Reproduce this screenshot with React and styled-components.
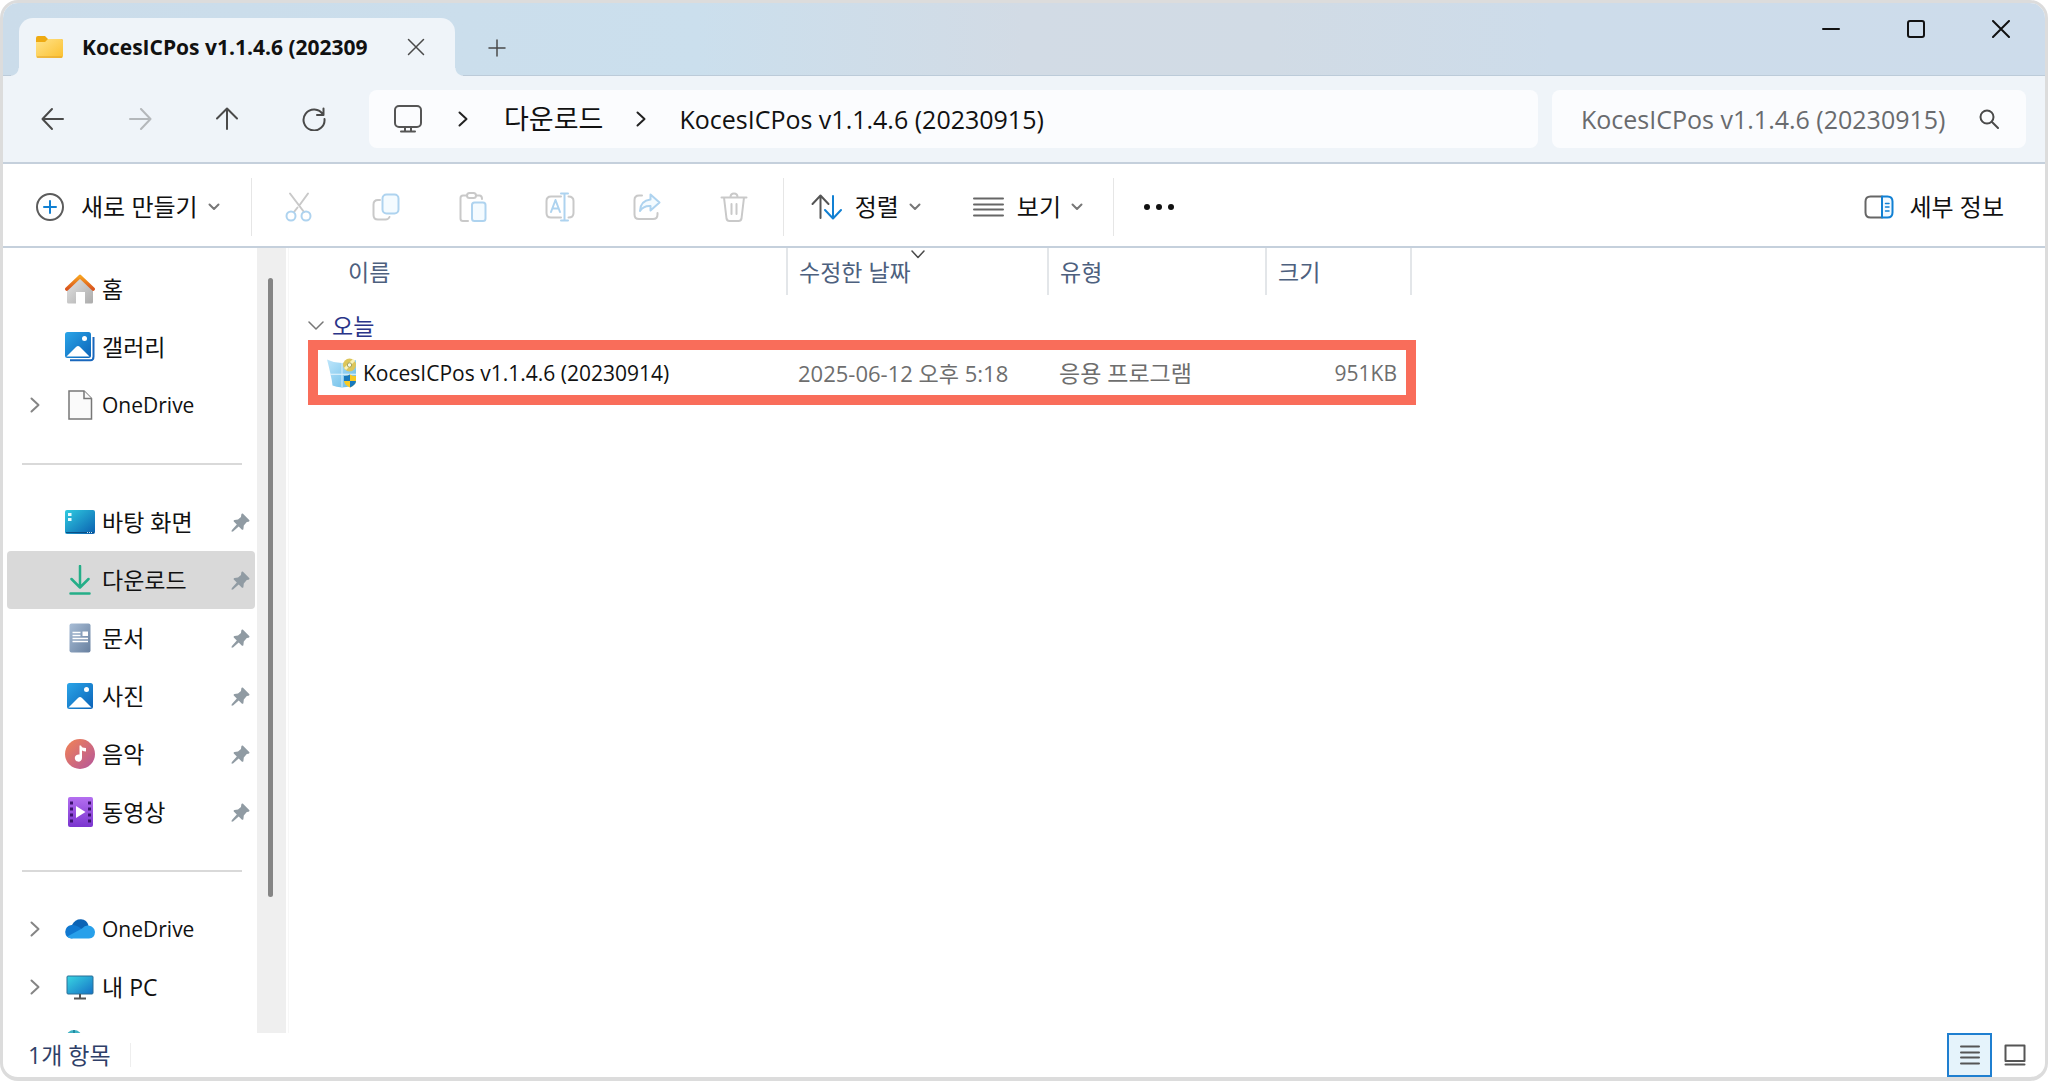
import styled, { createGlobalStyle } from "styled-components";

const GlobalStyle = createGlobalStyle`
  *, *::before, *::after {
    box-sizing: border-box;
  }

  body {
    margin: 0;
    background: #fff;
    font-family: "Open Sans", "Noto Sans CJK KR", sans-serif;
    color: #111;
  }

  button, input {
    font: inherit;
    color: inherit;
    border: none;
    background: none;
    padding: 0;
    margin: 0;
  }

  svg {
    display: block;
    flex-shrink: 0;
  }
`;

const Window = styled.div`
  height: 100vh;
  display: flex;
  flex-direction: column;
  overflow: hidden;
  background: #fff;
  border: 3px solid #dcdcdc;
  border-bottom-width: 4px;
  border-radius: 18px;
`;

const TitleBar = styled.header`
  display: flex;
  align-items: flex-end;
  height: 73px;
  flex-shrink: 0;
  padding-left: 16px;
  background: linear-gradient(90deg, #cbdcea 0%, #cbdfed 34%, #d2dbe5 50%, #d1dbe5 62%, #cddcea 76%, #cddceb 100%);
  box-shadow: inset 0 -1px #bccbd9;
`;

const Tab = styled.div`
  position: relative;
  display: flex;
  align-items: center;
  width: 436px;
  height: 58px;
  padding: 0 30px 0 17px;
  background: #eff4f9;
  border-radius: 14px 14px 0 0;

  &::before, &::after {
    content: "";
    position: absolute;
    bottom: 0;
    width: 8px;
    height: 8px;
  }

  &::before {
    left: -8px;
    background: radial-gradient(circle at 0 0, transparent 7px, #eff4f9 8px);
  }

  &::after {
    right: -8px;
    background: radial-gradient(circle at 100% 0, transparent 7px, #eff4f9 8px);
  }
`;

const TabTitle = styled.span`
  flex: 1;
  margin-left: 19px;
  font-size: 21px;
  font-weight: 700;
  line-height: 28px;
  white-space: nowrap;
`;

const NewTab = styled.button`
  display: grid;
  place-items: center;
  width: 50px;
  height: 56px;
  margin-left: 17px;
`;

const WindowControls = styled.div`
  display: flex;
  align-self: flex-start;
  margin-left: auto;
  margin-right: 2px;
`;

const WindowButton = styled.button`
  display: grid;
  place-items: center;
  width: 85px;
  height: 52px;
`;

const NavBar = styled.nav`
  display: flex;
  align-items: center;
  height: 88px;
  flex-shrink: 0;
  padding: 0 19px 0 6px;
  background: #eff4f9;
  border-bottom: 2px solid #c5d0dc;
`;

const NavButton = styled.button`
  display: grid;
  place-items: center;
  width: 87px;
  height: 58px;
  opacity: ${(props) => (props.disabled ? 0.35 : 1)};
`;

const Address = styled.div`
  display: flex;
  align-items: center;
  flex: 1;
  height: 58px;
  margin-left: 12px;
  padding-left: 25px;
  background: #fbfcfe;
  border-radius: 8px;
`;

const Crumb = styled.button`
  font-size: ${(props) => (props.$korean ? 27 : 25)}px;
  line-height: 36px;
  white-space: nowrap;
`;

const CrumbArrow = styled.span`
  display: grid;
  place-items: center;
  width: ${(props) => props.$width || 76}px;
`;

const Search = styled.label`
  display: flex;
  align-items: center;
  width: 474px;
  height: 58px;
  margin-left: 14px;
  padding: 0 27px 0 29px;
  background: #fbfcfe;
  border-radius: 8px;
`;

const SearchInput = styled.input`
  flex: 1;
  min-width: 0;
  font-size: 25px;
  line-height: 36px;
  outline: none;

  &::placeholder {
    color: #696b6e;
    opacity: 1;
  }
`;

const Toolbar = styled.div`
  display: flex;
  align-items: center;
  height: 84px;
  flex-shrink: 0;
  padding: 4px 41px 0 33px;
  border-bottom: 2px solid #c5d0dc;
`;

const ToolButton = styled.button`
  display: flex;
  align-items: center;
  gap: 10px;
  height: 58px;
  font-size: 24px;
  line-height: 32px;
  white-space: nowrap;
  margin-left: ${(props) => props.$space || 0}px;

  & > svg:first-child {
    margin-right: ${(props) => props.$iconSpace || 0}px;
  }
`;

const ToolIcon = styled.button`
  display: grid;
  place-items: center;
  width: 87px;
  height: 58px;
`;

const Divider = styled.span`
  width: 1px;
  height: 58px;
  margin: 0 ${(props) => props.$right}px 0 ${(props) => props.$left}px;
  background: #e6e6e6;
`;

const Push = styled.div`
  margin-left: auto;
`;

const Content = styled.div`
  display: flex;
  flex: 1;
  min-height: 0;
`;

const Sidebar = styled.aside`
  width: 254px;
  flex-shrink: 0;
  overflow: hidden;
  padding: 12px 2px 0 4px;
`;

const Place = styled.a`
  display: flex;
  align-items: center;
  height: 58px;
  padding-right: 5px;
  border-radius: 4px;
  color: #111;
  text-decoration: none;
  font-size: ${(props) => (props.$latin ? 21 : 23)}px;
  line-height: 32px;
  white-space: nowrap;
  background: ${(props) => (props.$active ? "#d9d9d9" : "transparent")};
`;

const PlaceArrow = styled.span`
  display: flex;
  width: 58px;
  padding-left: 23px;
`;

const PlaceIcon = styled.span`
  display: grid;
  place-items: center;
  width: 30px;
  margin-right: 7px;
`;

const Pin = styled.span`
  margin-left: auto;
`;

const Separator = styled.hr`
  height: 59px;
  margin: 0 13px 0 15px;
  border: none;
  background: linear-gradient(#d9d9d9, #d9d9d9) center / 100% 2px no-repeat;
`;

const ScrollTrack = styled.div`
  display: flex;
  justify-content: center;
  width: 29px;
  flex-shrink: 0;
  padding-top: 30px;
  background: #efefef;
`;

const ScrollThumb = styled.div`
  width: 5px;
  height: 82%;
  margin-right: 3px;
  border-radius: 3px;
  background: #858585;
`;

const Files = styled.main`
  flex: 1;
  min-width: 0;
  margin-left: 2px;
  padding-left: 19px;
  border-left: 1px solid #f7f7f7;
`;

const FileTable = styled.table`
  width: 1108px;
  table-layout: fixed;
  border-collapse: collapse;
  text-align: left;
`;

const HeadCell = styled.th`
  position: relative;
  height: 47px;
  padding: 0 0 0 ${(props) => props.$indent || 11}px;
  border-right: 2px solid #e3e6e9;
  font-size: 23px;
  font-weight: 400;
  line-height: 32px;
  color: #4d607e;
`;

const SortMark = styled.span`
  position: absolute;
  top: 2px;
  left: 50%;
  transform: translateX(-50%);
`;

const GroupCell = styled.td`
  height: 45px;
  padding: 16px 0 0;
`;

const GroupButton = styled.button`
  display: flex;
  align-items: center;
  gap: 8px;
  font-size: 23px;
  line-height: 28px;
  color: #2a3488;
`;

const FileRow = styled.tr`
  outline: 10px solid #f96d5a;
  outline-offset: -10px;
`;

const Cell = styled.td`
  height: 65px;
  padding: 0 ${(props) => (props.$right ? 14 : 0)}px 0 11px;
  text-align: ${(props) => (props.$right ? "right" : "left")};
  font-size: ${(props) => props.$size || 21}px;
  line-height: 32px;
  white-space: nowrap;
  color: #6e6e6e;
`;

const FileName = styled.div`
  display: flex;
  align-items: center;
  gap: 6px;
  padding-left: 8px;
  color: #111;
`;

const StatusBar = styled.footer`
  display: flex;
  align-items: center;
  height: 44px;
  flex-shrink: 0;
  padding: 0 19px 0 25px;
  font-size: 23px;
  line-height: 32px;
  color: #2f3f68;
`;

const StatusDivider = styled.span`
  width: 1px;
  height: 24px;
  margin-left: 19px;
  background: #eee;
`;

const ViewButton = styled.button`
  display: grid;
  place-items: center;
  width: 45px;
  height: 44px;
  background: ${(props) => (props.$active ? "#e5f3fb" : "transparent")};
  border: ${(props) => (props.$active ? "2px solid #1f7fd0" : "none")};
`;

const ViewButtons = styled.div`
  display: flex;
  margin-left: auto;
  margin-right: -11px;
`;

// Small line icon wrapper
function Line({ w = 24, h = 24, width = 2, color = "#4a4a4a", children }) {
  return (
    <svg width={w} height={h} viewBox={`0 0 ${w} ${h}`} fill="none" stroke={color} strokeWidth={width} strokeLinecap="round" strokeLinejoin="round" aria-hidden="true">
      {children}
    </svg>
  );
}

const Down = () => <Line w={12} h={8} color="#777"><path d="M1.500 1.500L6 6l4.500-4.500" /></Line>;
const Right = () => <Line w={10} h={16} color="#858585"><path d="M1.500 1.500L8.500 8l-7 6.500" /></Line>;
const CrumbChevron = () => <Line w={10} h={16} color="#222"><path d="M1.500 1.500L8.500 8l-7 6.500" /></Line>;

function PinIcon() {
  return (
    <svg width="19" height="19" viewBox="0 0 19 19" aria-hidden="true">
      <path d="M12 .8l6.200 6.200c.6.8.2 1.600-.8 1.800l-1.600.2-3 3.500-.4 3.400c-.2 1-1 1.200-1.700.5l-3-3L2 18.600l-1.400.1.1-1.400 5.100-5.700L3 8.800c-.7-.7-.4-1.500.5-1.700L7 6.500l3-2.600.3-2.300c.2-1 1-1.400 1.700-.8z" fill="#909ba3" />
    </svg>
  );
}

function FolderIcon() {
  return (
    <svg width="27" height="22" viewBox="0 0 27 22" aria-hidden="true">
      <defs>
        <linearGradient id="folder" x1="0" y1="0" x2="1" y2="1">
          <stop offset="0" stopColor="#ffe38a" />
          <stop offset="1" stopColor="#fbc02f" />
        </linearGradient>
      </defs>
      <path d="M0 2Q0 0 2 0h7l3 3h13q2 0 2 2v5H0z" fill="#eeaa12" />
      <path d="M0 6h9l3-3h13q2 0 2 2v15q0 2-2 2H2q-2 0-2-2z" fill="url(#folder)" />
      <path d="M1 21h25" stroke="#e2a32c" />
    </svg>
  );
}

function HomeIcon() {
  return (
    <svg width="30" height="30" viewBox="0 0 30 30" aria-hidden="true">
      <defs>
        <linearGradient id="wall" x1="0" y1="0" x2="1" y2="1">
          <stop offset="0" stopColor="#e6e6e6" />
          <stop offset="1" stopColor="#ababab" />
        </linearGradient>
        <linearGradient id="roof" x1="0" y1="0" x2="0" y2="1">
          <stop offset="0" stopColor="#f6a01f" />
          <stop offset="1" stopColor="#d9541e" />
        </linearGradient>
      </defs>
      <path d="M2 14L15 3l13 11v14q0 1.500-1.500 1.500H20V18h-9v11.500H3.500Q2 29.500 2 28z" fill="url(#wall)" />
      <path d="M1.800 15L15 2.500 28.200 15" fill="none" stroke="url(#roof)" strokeWidth="3.600" strokeLinecap="round" strokeLinejoin="round" />
    </svg>
  );
}

function PictureIcon({ stacked }) {
  const id = stacked ? "galleryBlue" : "pictureBlue";
  return (
    <svg width="30" height="30" viewBox="0 0 30 30" aria-hidden="true">
      <defs>
        <linearGradient id={id} x1="0" y1="0" x2="1" y2="1">
          <stop offset="0" stopColor="#2ba5e8" />
          <stop offset="1" stopColor="#0b63b8" />
        </linearGradient>
      </defs>
      {stacked && <path d="M28.500 5v19.500q0 3.700-3 3.700H5" fill="none" stroke="#1967bd" strokeWidth="2" />}
      <g transform={stacked ? "translate(-2 -2)" : ""}>
        <rect x="2" y="2" width="26" height="26" rx="2.500" fill={`url(#${id})`} />
        <path d="M3.500 26.500L13 17q2-2 4 0l9.500 9.500z" fill="#fff" />
        <circle cx="21.500" cy="8.500" r="2.500" fill="#fff" />
      </g>
    </svg>
  );
}

function PageIcon() {
  return (
    <svg width="30" height="30" viewBox="0 0 30 30" fill="#fafafa" stroke="#777" strokeWidth="1.500" aria-hidden="true">
      <path d="M4 1h15l7.500 7.500V29H4z" />
      <path d="M19 1v7.500h7.500" />
    </svg>
  );
}

function DesktopIcon() {
  return (
    <svg width="30" height="24" viewBox="0 0 30 24" aria-hidden="true">
      <defs>
        <linearGradient id="desk" x1="0" y1="0" x2="1" y2="1">
          <stop offset="0" stopColor="#2fcbe0" />
          <stop offset="1" stopColor="#0a5fb0" />
        </linearGradient>
      </defs>
      <rect width="30" height="24" rx="2" fill="url(#desk)" />
      <path d="M3 3h3.500v3H3zM3 8h3.500v3H3z" fill="#e9fbff" />
      <path d="M1 22.500h28" stroke="#0a4f86" />
      <path d="M22 22.500h5" stroke="#d0e6f4" strokeDasharray="1 1" />
    </svg>
  );
}

function DocumentIcon() {
  return (
    <svg width="22" height="30" viewBox="0 0 22 30" aria-hidden="true">
      <defs>
        <linearGradient id="doc" x1="0" y1="0" x2="1" y2="1">
          <stop offset="0" stopColor="#a8bdd6" />
          <stop offset="1" stopColor="#68809f" />
        </linearGradient>
      </defs>
      <rect x="0.500" y="0.500" width="21" height="29" rx="2" fill="url(#doc)" />
      <path d="M3.500 9.500h8M3.500 12.500h8M3.500 15.500h15.500M3.500 18.500h15.500" stroke="#fff" strokeWidth="1.500" />
      <path d="M13.500 8.500H19v4.500h-5.500z" fill="#fff" />
    </svg>
  );
}

function MusicIcon() {
  return (
    <svg width="30" height="30" viewBox="0 0 30 30" aria-hidden="true">
      <defs>
        <linearGradient id="music" x1="0" y1="0" x2="1" y2="1">
          <stop offset="0" stopColor="#f28454" />
          <stop offset="1" stopColor="#b4559c" />
        </linearGradient>
      </defs>
      <circle cx="15" cy="15" r="15" fill="url(#music)" />
      <path d="M14.500 6.500h1.500q.5 2.500 5 2.500v3.500q-2.500 0-4-1V19a3.600 3.600 0 1 1-2.500-3.400z" fill="#fff" />
    </svg>
  );
}

function VideoIcon() {
  return (
    <svg width="25" height="30" viewBox="0 0 25 30" aria-hidden="true">
      <defs>
        <linearGradient id="video" x1="0" y1="0" x2="0" y2="1">
          <stop offset="0" stopColor="#b46ff0" />
          <stop offset="1" stopColor="#7a35cf" />
        </linearGradient>
      </defs>
      <rect width="25" height="30" rx="2" fill="url(#video)" />
      <path d="M3.500 4.500v22M21.500 4.500v22" stroke="#3c1270" strokeWidth="3" strokeDasharray="3 3" />
      <path d="M8 9l9.500 6L8 21z" fill="#fff" />
    </svg>
  );
}

function CloudIcon() {
  return (
    <svg width="30" height="20" viewBox="0 0 30 20" aria-hidden="true">
      <path d="M7 6Q10 0 16 .2q6 .5 7.500 6.300l-8 5z" fill="#0b63b5" />
      <path d="M6.500 6q3.500-.5 6.500 1.500l7 4.500-13 7.500Q.5 19 .2 13 .5 7 6.500 6z" fill="#1078d0" />
      <path d="M17 9.500q3-3.500 6.500-3 6 1 6.500 6.500-.2 6-6 6.500H7q-3-.2-4.700-2z" fill="#28a0ea" />
    </svg>
  );
}

function ComputerIcon() {
  return (
    <svg width="28" height="25" viewBox="0 0 28 25" aria-hidden="true">
      <defs>
        <linearGradient id="screen" x1="0" y1="0" x2="1" y2="1">
          <stop offset="0" stopColor="#39d6e2" />
          <stop offset="1" stopColor="#1571c6" />
        </linearGradient>
      </defs>
      <rect x="1" y="1" width="26" height="18" rx="1" fill="url(#screen)" stroke="#2b6f96" />
      <path d="M14 19v4M8 23.500h12" stroke="#555" strokeWidth="2" />
    </svg>
  );
}

function NetworkIcon() {
  return (
    <svg width="30" height="32" viewBox="0 0 30 32" aria-hidden="true">
      <circle cx="9" cy="9" r="8" fill="#3fb3c4" />
      <path d="M9 1v16M1 9h16" stroke="#1b7f97" strokeWidth="1.500" />
      <rect x="8" y="12" width="21" height="15" rx="1" fill="#2a8fd3" />
      <path d="M13 30h11" stroke="#555" strokeWidth="2" />
    </svg>
  );
}

function InstallerIcon() {
  return (
    <svg width="30" height="30" viewBox="0 0 30 30" aria-hidden="true">
      <defs>
        <linearGradient id="pane" x1="0" y1="0" x2="1" y2="1">
          <stop offset="0" stopColor="#bfe6fb" />
          <stop offset="1" stopColor="#62b9e6" />
        </linearGradient>
      </defs>
      <path d="M0 1.500q6 3 15 3.500v11H3.500q-1.500-7-3.500-14.500zM15 5q8 0 14-3v14H15zM3.500 16.500H15v13Q9 29 5.500 27.500 5 22 3.500 16.500zM15 16.500h14v8.500q-4 4-14 4.500z" fill="url(#pane)" />
      <path d="M3 16.200h26M15 5v24" stroke="#d8f0fc" />
      <circle cx="22.500" cy="7" r="6.500" fill="#ddc65a" />
      <path d="M18 11l9-9" stroke="#f8f1ba" strokeWidth="3" />
      <circle cx="22.500" cy="7" r="2.200" fill="#f4f8ec" stroke="#a4a45b" />
      <path d="M23 16.500q3 1.800 6 1.500v5q-.6 4-6 6.500-5.400-2.500-6-6.500v-5q3 .3 6-1.500z" fill="#f7ca25" />
      <path d="M23 16.500V23h-6v-5q3 .3 6-1.500zM23 23h6q-.6 4-6 6.500z" fill="#1879bd" />
    </svg>
  );
}

const quickAccess = [
  { name: "바탕 화면", icon: <DesktopIcon /> },
  {
    name: "다운로드",
    active: true,
    icon: (
      <Line w={22} h={30} width={2} color="#25ae88">
        <path d="M11 1v21M2.500 14l8.500 8.500 8.500-8.500M1.500 28.500h19" strokeWidth="2.500" />
      </Line>
    ),
  },
  { name: "문서", icon: <DocumentIcon /> },
  { name: "사진", icon: <PictureIcon /> },
  { name: "음악", icon: <MusicIcon /> },
  { name: "동영상", icon: <VideoIcon /> },
];

function SidebarItem({ name, label, icon, active, pinned, arrow, latin }) {
  return (
    <Place href="#" $active={active} $latin={latin} aria-label={label} aria-current={active ? "page" : undefined}>
      <PlaceArrow>{arrow && <Right />}</PlaceArrow>
      <PlaceIcon>{icon}</PlaceIcon>
      {name && <span>{name}</span>}
      {pinned && <Pin><PinIcon /></Pin>}
    </Place>
  );
}

export default function App() {
  return (
    <>
      <GlobalStyle />
      <Window>
        <TitleBar>
          <Tab>
            <FolderIcon />
            <TabTitle>KocesICPos v1.1.4.6 (202309</TabTitle>
            <button aria-label="탭 닫기">
              <Line w={18} h={18} width={1.5}><path d="M1.500 1.500l15 15M16.500 1.500l-15 15" /></Line>
            </button>
          </Tab>
          <NewTab aria-label="새 탭">
            <Line w={18} h={18} width={1.5}><path d="M9 1v16M1 9h16" /></Line>
          </NewTab>
          <WindowControls>
            <WindowButton aria-label="최소화">
              <Line w={18} h={18} color="#111"><path d="M1 9h16" /></Line>
            </WindowButton>
            <WindowButton aria-label="최대화">
              <Line w={18} h={18} color="#111"><rect x="1" y="1" width="16" height="16" rx="2" /></Line>
            </WindowButton>
            <WindowButton aria-label="닫기">
              <Line w={18} h={18} color="#111"><path d="M1 1l16 16M17 1L1 17" /></Line>
            </WindowButton>
          </WindowControls>
        </TitleBar>

        <NavBar>
          <NavButton aria-label="뒤로">
            <Line w={24} h={24}><path d="M22 12H2M11 2L1.500 12 11 22" /></Line>
          </NavButton>
          <NavButton aria-label="앞으로" disabled>
            <Line w={24} h={24}><path d="M2 12h20M13 2l9.500 10L13 22" /></Line>
          </NavButton>
          <NavButton aria-label="위로">
            <Line w={24} h={24}><path d="M12 22V2M2 11.500l10-10 10 10" /></Line>
          </NavButton>
          <NavButton aria-label="새로 고침">
            <Line w={24} h={24}><path d="M21 7.500A10.500 10.500 0 1 0 22.500 12M21.500 1.500V8h-6.500" /></Line>
          </NavButton>
          <Address>
            <Line w={28} h={28} color="#555">
              <rect x="1" y="1" width="26" height="21" rx="4" />
              <path d="M11 22.500v3M17 22.500v3M7 26.500h14" />
            </Line>
            <CrumbArrow $width={82}><CrumbChevron /></CrumbArrow>
            <Crumb $korean>다운로드</Crumb>
            <CrumbArrow><CrumbChevron /></CrumbArrow>
            <Crumb>KocesICPos v1.1.4.6 (20230915)</Crumb>
          </Address>
          <Search>
            <SearchInput type="text" aria-label="검색" placeholder="KocesICPos v1.1.4.6 (20230915)" />
            <Line w={20} h={20}><circle cx="8" cy="8" r="6.500" /><path d="M13 13l6 6" /></Line>
          </Search>
        </NavBar>

        <Toolbar>
          <ToolButton $iconSpace={7}>
            <Line w={28} h={28} color="#5c5c5c">
              <circle cx="14" cy="14" r="13" />
              <path d="M14 8v12M8 14h12" stroke="#1180d3" />
            </Line>
            새로 만들기
            <Down />
          </ToolButton>
          <Divider $left={31} $right={4} />
          <ToolIcon aria-label="잘라내기">
            <Line w={28} h={30} color="#c9c9c9">
              <path d="M5 1.500L19 20M23 1.500l-8 11M12.500 15.500L9 20" />
              <circle cx="6" cy="24" r="4.500" stroke="#aed3ef" />
              <circle cx="21" cy="24" r="4.500" stroke="#aed3ef" />
            </Line>
          </ToolIcon>
          <ToolIcon aria-label="복사">
            <Line w={28} h={28} color="#c9c9c9">
              <path d="M8 7H6q-4.500 0-4.500 4.500V22q0 4.500 4.500 4.500h7.500q3 0 4-2.500" />
              <rect x="10.500" y="1.500" width="16" height="19" rx="4" stroke="#aed3ef" fill="#f4fbff" />
            </Line>
          </ToolIcon>
          <ToolIcon aria-label="붙여넣기">
            <Line w={28} h={30} color="#c9c9c9">
              <path d="M8 3.500H4Q1.500 3.500 1.500 6v20.500Q1.500 29 4 29h5M17 3.500h3.500Q23 3.500 23 7" />
              <rect x="8" y="1" width="9" height="5" rx="2.500" />
              <rect x="13" y="10.500" width="13.500" height="18.500" rx="2.500" stroke="#aed3ef" fill="#f4fbff" />
            </Line>
          </ToolIcon>
          <ToolIcon aria-label="이름 바꾸기">
            <Line w={30} h={30} color="#c9c9c9">
              <path d="M16 4.500H6Q1.500 4.500 1.500 9v12q0 4.500 4.500 4.500h10M23.500 4.500q5 0 5 4.500v12q0 4.500-5 4.500" />
              <path d="M6 20l4.500-12L15 20M7.500 16.500h6M19.500 1.500v27M16 1.500h7M16 28.500h7" stroke="#aed3ef" />
            </Line>
          </ToolIcon>
          <ToolIcon aria-label="공유">
            <Line w={28} h={28} color="#c9c9c9">
              <path d="M9 2.500H6Q1.500 2.500 1.500 7v14.500Q1.500 26 6 26h14q4.500 0 4.500-4.500V20" />
              <path d="M17.500 1.500L26.500 9.500l-9 8v-4.500q-7-.5-10.500 5Q7.500 7.500 17.500 6.500z" stroke="#aed3ef" fill="#f4fbff" />
            </Line>
          </ToolIcon>
          <ToolIcon aria-label="삭제">
            <Line w={28} h={30} color="#c9c9c9">
              <path d="M1.500 5.500h25M4 5.500l2.500 21Q7 29 9.500 29h9q2.500 0 3-2.500l2.500-21M10.500 5q0-3.500 3.500-3.500T17.500 5M11.500 12v10M16.500 12v10" />
            </Line>
          </ToolIcon>
          <Divider $left={5} $right={27} />
          <ToolButton $iconSpace={3}>
            <Line w={31} h={26} color="#555">
              <path d="M9.500 24V2M1.500 10l8-8.500 8 8.500" />
              <path d="M22 2v22M14 16l8 8.500 8-8.500" stroke="#1180d3" />
            </Line>
            정렬
            <Down />
          </ToolButton>
          <ToolButton $iconSpace={3} $space={52}>
            <Line w={31} h={20} color="#666"><path d="M1 1.500h29M1 7.500h29M1 12.500h29M1 18.500h29" /></Line>
            보기
            <Down />
          </ToolButton>
          <Divider $left={30} $right={30} />
          <ToolButton aria-label="더 보기">
            <svg width="30" height="6" viewBox="0 0 30 6" fill="#111" aria-hidden="true">
              <circle cx="3" cy="3" r="3" /><circle cx="15" cy="3" r="3" /><circle cx="27" cy="3" r="3" />
            </svg>
          </ToolButton>
          <Push>
            <ToolButton $iconSpace={5}>
              <Line w={30} h={24} color="#666">
                <path d="M18 1.500H6.500Q1.500 1.500 1.500 6.500v11q0 5 5 5H18" />
                <path d="M18 1.500h5.500q5 0 5 5v11q0 5-5 5H18z" stroke="#1180d3" fill="#f1f9ff" />
                <path d="M21.500 8.500h3.500M21.500 12h3.500M21.500 16h3.500" stroke="#1180d3" strokeWidth="1.500" />
              </Line>
              세부 정보
            </ToolButton>
          </Push>
        </Toolbar>

        <Content>
          <Sidebar>
            <SidebarItem name="홈" icon={<HomeIcon />} />
            <SidebarItem name="갤러리" icon={<PictureIcon stacked />} />
            <SidebarItem name="OneDrive" icon={<PageIcon />} arrow latin />
            <Separator />
            {quickAccess.map((item) => (
              <SidebarItem key={item.name} pinned {...item} />
            ))}
            <Separator />
            <SidebarItem name="OneDrive" icon={<CloudIcon />} arrow latin />
            <SidebarItem name="내 PC" icon={<ComputerIcon />} arrow />
            <SidebarItem label="네트워크" icon={<NetworkIcon />} />
          </Sidebar>
          <ScrollTrack><ScrollThumb /></ScrollTrack>

          <Files>
            <FileTable>
              <colgroup>
                <col width="479" />
                <col width="261" />
                <col width="218" />
                <col width="145" />
                <col />
              </colgroup>
              <thead>
                <tr>
                  <HeadCell $indent={40}>이름</HeadCell>
                  <HeadCell aria-sort="descending">
                    수정한 날짜
                    <SortMark><Line w={14} h={9} width={1.5}><path d="M1 1l6 6.500L13 1" /></Line></SortMark>
                  </HeadCell>
                  <HeadCell>유형</HeadCell>
                  <HeadCell>크기</HeadCell>
                  <td />
                </tr>
              </thead>
              <tbody>
                <tr>
                  <GroupCell colSpan={5}>
                    <GroupButton aria-expanded="true">
                      <Line w={16} h={10} width={1.5} color="#777"><path d="M1 1l7 7 7-7" /></Line>
                      오늘
                    </GroupButton>
                  </GroupCell>
                </tr>
                <FileRow>
                  <Cell>
                    <FileName>
                      <InstallerIcon />
                      KocesICPos v1.1.4.6 (20230914)
                    </FileName>
                  </Cell>
                  <Cell $size={22}>2025-06-12 오후 5:18</Cell>
                  <Cell $size={23}>응용 프로그램</Cell>
                  <Cell $right>951KB</Cell>
                  <td />
                </FileRow>
              </tbody>
            </FileTable>
          </Files>
        </Content>

        <StatusBar>
          <span>1개 항목</span>
          <StatusDivider />
          <ViewButtons>
            <ViewButton $active aria-label="자세히">
              <Line w={20} h={20} color="#555"><path d="M1 1.500h18M1 7.500h18M1 12.500h18M1 18.500h18" /></Line>
            </ViewButton>
            <ViewButton aria-label="큰 아이콘">
              <Line w={22} h={22} color="#555"><path d="M1.500 1.500h19V17h-19zM1.500 20.500h19" /></Line>
            </ViewButton>
          </ViewButtons>
        </StatusBar>
      </Window>
    </>
  );
}
